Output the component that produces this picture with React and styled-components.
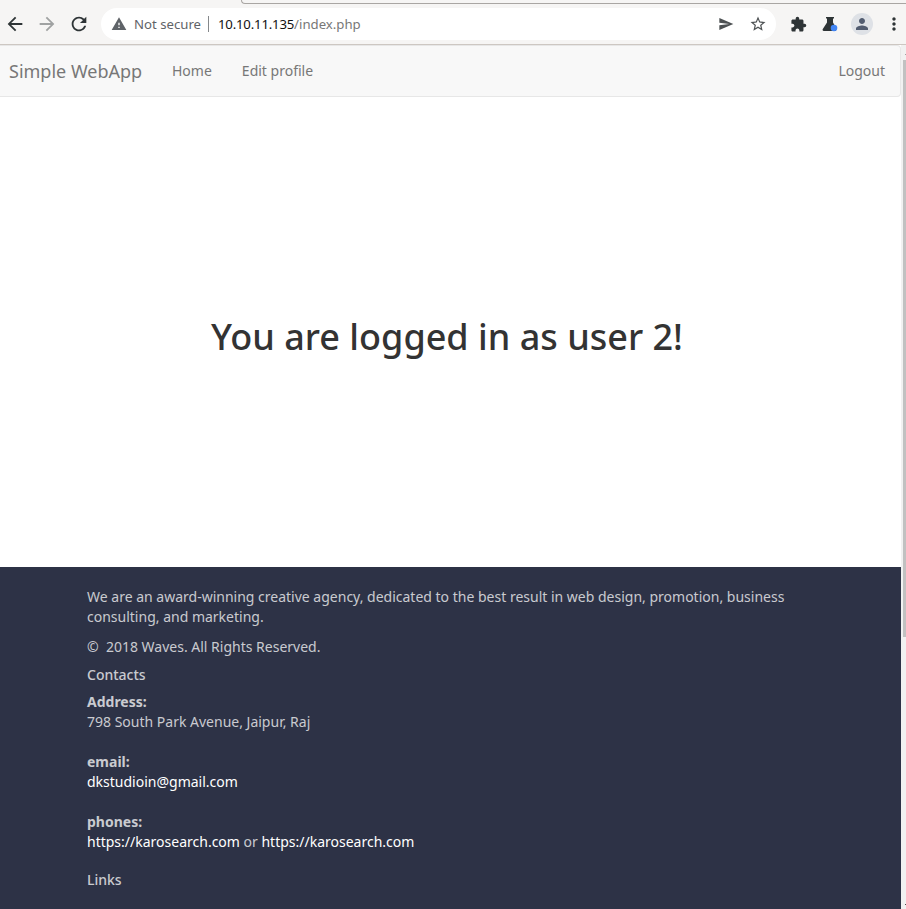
import React from 'react';
import styled, { createGlobalStyle } from 'styled-components';
import {
  MdArrowBack, MdArrowForward, MdRefresh, MdWarning, MdSend,
  MdStarBorder, MdExtension, MdPerson, MdMoreVert,
} from 'react-icons/md';

const GlobalStyle = createGlobalStyle`
  * { box-sizing: border-box; }
  html, body { margin: 0; padding: 0; overflow: hidden; }
  body { font-family: "Noto Sans", sans-serif; font-size: 14px; line-height: 20px; color: #333; background: #fff; }
`;

const Window = styled.div`
  width: 906px;
  height: 909px;
  display: flex;
  flex-direction: column;
  overflow: hidden;
`;

const TabStrip = styled.div`
  height: 4px;
  flex: none;
  padding-left: 241px;
  background: #f6f5f4;
`;

const TabEdge = styled.div`
  height: 4px;
  margin-right: -4px;
  border: solid #a9a6a3;
  border-width: 0 0 1px 1px;
  border-bottom-left-radius: 5px;
`;

const Toolbar = styled.div`
  height: 41px;
  flex: none;
  display: flex;
  align-items: center;
  background: #f6f5f4;
  border-bottom: 1px solid #cdc7c2;
`;

const IconButton = styled.button`
  width: 32px;
  height: 32px;
  flex: none;
  padding: 0;
  border: 0;
  background: none;
  display: flex;
  align-items: center;
  justify-content: center;
  color: ${(p) => p.$color || '#2e3436'};
  svg { display: block; }
`;

const NavButtons = styled.div`
  display: flex;
  flex: none;
  width: 102px;
  margin-left: -1px;
`;

const AddressBar = styled.div`
  width: 675px;
  height: 32px;
  flex: none;
  padding-left: 10px;
  padding-right: 2px;
  display: flex;
  align-items: center;
  border-radius: 16px;
  background: #fff;
  color: #5f6368;
`;

const Security = styled.span`
  width: 66px;
  margin-left: 7px;
  font-size: 13.2px;
  white-space: nowrap;
`;

const Divider = styled.span`
  width: 1px;
  height: 16px;
  margin: 0 9px 0 8px;
  background: #85888b;
`;

const Url = styled.span`
  flex: 1;
  font-size: 13.2px;
  color: #777;
  white-space: nowrap;
`;

const Host = styled.span`
  color: #111;
  letter-spacing: -0.2px;
`;

const Actions = styled.div`
  display: flex;
  flex: none;
  margin-left: 6px;
`;

const Avatar = styled.span`
  width: 22px;
  height: 22px;
  border-radius: 50%;
  display: flex;
  align-items: center;
  justify-content: center;
  background: #dee1e6;
  color: #525c70;
`;

const Viewport = styled.div`
  flex: 1;
  min-height: 0;
  display: flex;
`;

const Page = styled.main`
  width: 901px;
  flex: none;
  display: flex;
  flex-direction: column;
`;

const Navbar = styled.nav`
  height: 52px;
  flex: none;
  display: flex;
  align-items: center;
  padding: 0 15px 0 9px;
  border: 1px solid #e7e7e7;
  border-left: 0;
  border-radius: 0 4px 4px 0;
  background: #f8f8f8;
`;

const Brand = styled.a`
  width: 133px;
  margin-right: 30px;
  font-size: 18px;
  color: #777;
  white-space: nowrap;
`;

const NavLink = styled.a`
  margin-right: 30px;
  color: #777;
  &:last-child { margin: 0 0 0 auto; }
`;

const Hero = styled.section`
  height: 470px;
  flex: none;
  display: flex;
  justify-content: center;
  padding: 220px 7px 0 0;
`;

const Title = styled.h1`
  margin: 0;
  font-size: 36px;
  font-weight: 500;
  line-height: 40px;
  white-space: nowrap;
`;

const Footer = styled.footer`
  flex: 1;
  padding: 20px 87px 0;
  background: #2d3246;
  color: rgba(255, 255, 255, 0.75);
`;

const Paragraph = styled.p`
  margin: 0 0 10px;
`;

const Heading = styled.h5`
  margin: 10px 0;
  font-size: 14px;
  font-weight: 500;
  line-height: 15px;
`;

const Contact = styled.dl`
  margin: 0 0 20px;
`;

const Term = styled.dt`
  font-weight: 700;
`;

const Detail = styled.dd`
  margin: 0;
`;

const Link = styled.a`
  color: #fff;
`;

const Scrollbar = styled.div`
  flex: 1;
  padding: 9px 0 4px 2px;
  display: flex;
  flex-direction: column;
  background: #f1f1f1;
`;

const Thumb = styled.div`
  height: 577px;
  margin: 5px 0 auto;
  background: #c1c1c1;
`;

const ScrollArrow = styled.div`
  width: 1px;
  height: 1px;
  align-self: flex-end;
  background: ${(p) => p.$color};
`;

const Flask = () => (
  <svg width="16" height="16" viewBox="0 0 16 16">
    <path d="M4 1h8v1.6h-1v3.8l3 5.4V15H1.8c-1.1 0-1.6-.9-1-1.9L5 6.4V2.6H4z" fill="#2e3436" />
    <circle cx="12" cy="12" r="3.3" fill="#4285f4" />
  </svg>
);

export default function App() {
  return (
    <Window>
      <GlobalStyle />
      <TabStrip><TabEdge /></TabStrip>
      <Toolbar>
        <NavButtons>
          <IconButton aria-label="Back"><MdArrowBack size={22} /></IconButton>
          <IconButton aria-label="Forward" $color="#a0a2a2"><MdArrowForward size={22} /></IconButton>
          <IconButton aria-label="Reload"><MdRefresh size={22} /></IconButton>
        </NavButtons>
        <AddressBar>
          <MdWarning size={16} />
          <Security>Not secure</Security>
          <Divider />
          <Url><Host>10.10.11.135</Host>/index.php</Url>
          <IconButton aria-label="Send" $color="#4d5153"><MdSend size={16} /></IconButton>
          <IconButton aria-label="Bookmark" $color="#4d5153"><MdStarBorder size={18} /></IconButton>
        </AddressBar>
        <Actions>
          <IconButton aria-label="Extensions"><MdExtension size={17} /></IconButton>
          <IconButton aria-label="Experiments"><Flask /></IconButton>
          <IconButton aria-label="Profile"><Avatar><MdPerson size={18} /></Avatar></IconButton>
          <IconButton aria-label="Menu"><MdMoreVert size={20} /></IconButton>
        </Actions>
      </Toolbar>
      <Viewport>
        <Page>
          <Navbar>
            <Brand>Simple WebApp</Brand>
            <NavLink>Home</NavLink>
            <NavLink>Edit profile</NavLink>
            <NavLink>Logout</NavLink>
          </Navbar>
          <Hero><Title>You are logged in as user 2!</Title></Hero>
          <Footer>
            <Paragraph>
              We are an award-winning creative agency, dedicated to the best result in web design, promotion, business consulting, and marketing.
            </Paragraph>
            <Paragraph>©&nbsp; 2018 Waves. All Rights Reserved.</Paragraph>
            <Heading>Contacts</Heading>
            <Contact>
              <Term>Address:</Term>
              <Detail>798 South Park Avenue, Jaipur, Raj</Detail>
            </Contact>
            <Contact>
              <Term>email:</Term>
              <Detail><Link>dkstudioin@gmail.com</Link></Detail>
            </Contact>
            <Contact>
              <Term>phones:</Term>
              <Detail><Link>https://karosearch.com</Link> or <Link>https://karosearch.com</Link></Detail>
            </Contact>
            <Heading>Links</Heading>
          </Footer>
        </Page>
        <Scrollbar>
          <ScrollArrow $color="#a3a3a3" />
          <Thumb />
          <ScrollArrow $color="#505050" />
        </Scrollbar>
      </Viewport>
    </Window>
  );
}
